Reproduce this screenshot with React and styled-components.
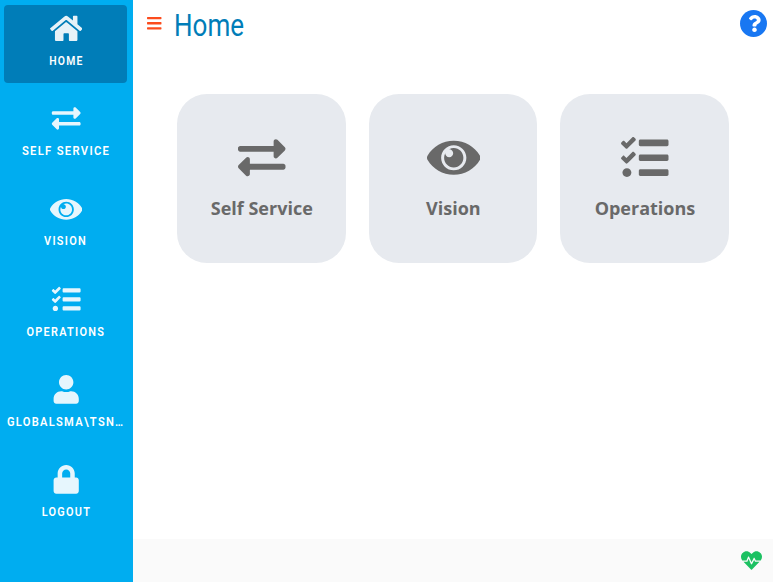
import React from "react";
import styled, { createGlobalStyle } from "styled-components";
import {
  FaExchangeAlt, FaUser, FaLock, FaBars, FaQuestion, FaHeartbeat,
} from "react-icons/fa";

const GlobalStyle = createGlobalStyle`
  *, *::before, *::after { box-sizing: border-box; }
  body { margin: 0; background: #fff; overflow: hidden; }
`;

const Shell = styled.div`
  display: flex;
  height: 100vh;
  font-family: "Open Sans", sans-serif;
`;

const Sidebar = styled.nav`
  flex: 0 0 133px;
  min-width: 0;
  padding: 5px 6px 0 4px;
  background: #00adf0;
`;

const NavItem = styled.a`
  display: flex;
  flex-direction: column;
  align-items: center;
  height: 78px;
  margin-bottom: 12.3px;
  padding: 9px 0 0 1px;
  border-radius: 4px;
  background: ${(p) => (p.$active ? "#007db8" : "transparent")};
  color: #fff;
  cursor: pointer;
  svg {
    display: block;
    flex: none;
    height: 28.8px;
    width: 32.4px;
    opacity: 0.9;
  }
`;

const NavLabel = styled.span`
  margin-top: 9px;
  font: 600 13px/18px Roboto, sans-serif;
  letter-spacing: 1.5px;
  white-space: nowrap;
  transform: scaleX(${(p) => p.$stretch});
`;

const Page = styled.div`
  flex: 1;
  display: flex;
  flex-direction: column;
  min-width: 0;
`;

const Header = styled.header`
  display: flex;
  align-items: flex-start;
  height: 50px;
  padding: 0 6px 0 13px;
`;

const MenuButton = styled.button`
  display: flex;
  margin: 14.5px 12px 0 0;
  padding: 0;
  border: 0;
  background: none;
  color: #fc4c1d;
  font-size: 16.5px;
`;

const Title = styled.h1`
  margin: 6px 0 0 -1px;
  font: 400 31px/40px Roboto, sans-serif;
  color: #007db8;
  transform: scaleX(0.84);
  transform-origin: left;
`;

const HelpButton = styled.button`
  display: flex;
  align-items: center;
  justify-content: center;
  width: 27px;
  height: 27px;
  margin: 10px 0 0 auto;
  padding: 0 0 0 1px;
  border: 0;
  border-radius: 50%;
  background: #1877f2;
  color: #fff;
  font-size: 17px;
`;

const Tiles = styled.main`
  flex: 1;
  display: grid;
  grid-template-columns: repeat(3, 168.6px);
  grid-auto-rows: 169px;
  gap: 23px;
  padding: 44px 0 0 44px;
`;

const Tile = styled.a`
  display: flex;
  flex-direction: column;
  align-items: center;
  padding: 40px 0 0 1px;
  border-radius: 30px;
  background: #e7eaef;
  color: #696969;
  cursor: pointer;
  svg {
    display: block;
    flex: none;
    height: 47.5px;
    width: 53.5px;
  }
`;

const TileLabel = styled.span`
  margin-top: 14.5px;
  font-size: 18px;
  line-height: 25px;
  font-weight: 700;
`;

const Footer = styled.footer`
  display: flex;
  align-items: center;
  justify-content: flex-end;
  height: 43px;
  padding-right: 11px;
  background: #fafafa;
  color: #1cc162;
  font-size: 21px;
`;

const HomeIcon = () => (
  <svg viewBox="0 0 576 512" fill="currentColor">
    <path d="M488 312.7V456c0 13.3-10.7 24-24 24H348c-6.6 0-12-5.4-12-12V356c0-6.6-5.4-12-12-12h-72c-6.6 0-12 5.4-12 12v112c0 6.6-5.4 12-12 12H112c-13.3 0-24-10.7-24-24V312.7c0-3.6 1.6-7 4.4-9.3l188-154.8c4.4-3.6 10.8-3.6 15.3 0l188 154.8c2.7 2.3 4.3 5.7 4.3 9.3zm83.6-60.9L488 182.9V44.4c0-6.6-5.4-12-12-12h-56c-6.6 0-12 5.4-12 12V117l-89.5-73.7c-17.7-14.6-43.3-14.6-61 0L4.4 251.8c-5.1 4.2-5.8 11.8-1.6 16.9l25.5 31c4.2 5.1 11.8 5.8 16.9 1.6l235.2-193.7c4.4-3.6 10.8-3.6 15.3 0l235.2 193.7c5.1 4.2 12.7 3.5 16.9-1.6l25.5-31c4.2-5.2 3.4-12.7-1.7-16.9z" />
  </svg>
);

const EyeIcon = () => (
  <svg viewBox="0 0 576 512" fill="currentColor">
    <path d="M569.354 231.631C512.969 135.949 407.81 72 288 72 168.14 72 63.004 135.994 6.646 231.631a47.999 47.999 0 0 0 0 48.739C63.031 376.051 168.19 440 288 440c119.86 0 224.996-63.994 281.354-159.631a47.997 47.997 0 0 0 0-48.738zM288 392c-75.162 0-136-60.827-136-136 0-75.162 60.826-136 136-136 75.162 0 136 60.826 136 136 0 75.162-60.826 136-136 136zm104-136c0 57.438-46.562 104-104 104s-104-46.562-104-104c0-17.708 4.431-34.379 12.236-48.973l-.001.032c0 23.651 19.173 42.823 42.824 42.823s42.824-19.173 42.824-42.823c0-23.651-19.173-42.824-42.824-42.824l-.032.001C253.621 156.431 270.292 152 288 152c57.438 0 104 46.562 104 104z" />
  </svg>
);

const TasksIcon = () => (
  <svg viewBox="0 0 512 512" fill="currentColor">
    <path d="M208 132h288c8.8 0 16-7.2 16-16V76c0-8.8-7.2-16-16-16H208c-8.8 0-16 7.2-16 16v40c0 8.8 7.2 16 16 16zm0 160h288c8.8 0 16-7.2 16-16v-40c0-8.8-7.2-16-16-16H208c-8.8 0-16 7.2-16 16v40c0 8.8 7.2 16 16 16zm0 160h288c8.8 0 16-7.2 16-16v-40c0-8.8-7.2-16-16-16H208c-8.8 0-16 7.2-16 16v40c0 8.8 7.2 16 16 16zM64 368c-26.5 0-48.6 21.5-48.6 48s22.1 48 48.6 48 48-21.5 48-48-21.5-48-48-48zm92.5-299l-72.2 72.2-15.6 15.6c-4.7 4.7-12.9 4.7-17.6 0L3.5 109.4c-4.7-4.7-4.7-12.3 0-17l15.7-15.7c4.7-4.7 12.3-4.7 17 0l22.7 22.1 63.7-63.3c4.7-4.7 12.3-4.7 17 0l17 16.5c4.6 4.7 4.6 12.3-.1 17zm0 159.6l-72.2 72.2-15.7 15.7c-4.7 4.7-12.9 4.7-17.6 0L3.5 269c-4.7-4.7-4.7-12.3 0-17l15.7-15.7c4.7-4.7 12.3-4.7 17 0l22.7 22.1 63.7-63.7c4.7-4.7 12.3-4.7 17 0l17 17c4.6 4.6 4.6 12.2-.1 16.9z" />
  </svg>
);

const navItems = [
  { label: "HOME", Icon: HomeIcon, stretch: 0.8, active: true },
  { label: "SELF SERVICE", Icon: FaExchangeAlt, stretch: 0.865 },
  { label: "VISION", Icon: EyeIcon, stretch: 0.84 },
  { label: "OPERATIONS", Icon: TasksIcon, stretch: 0.84 },
  { label: "GLOBALSMA\\TSN…", Icon: FaUser, stretch: 0.855 },
  { label: "LOGOUT", Icon: FaLock, stretch: 0.84 },
];

const tiles = [
  { label: "Self Service", Icon: FaExchangeAlt },
  { label: "Vision", Icon: EyeIcon },
  { label: "Operations", Icon: TasksIcon },
];

export default function App() {
  return (
    <Shell>
      <GlobalStyle />
      <Sidebar>
        {navItems.map(({ label, Icon, stretch, active }) => (
          <NavItem key={label} $active={active}>
            <Icon />
            <NavLabel $stretch={stretch}>{label}</NavLabel>
          </NavItem>
        ))}
      </Sidebar>
      <Page>
        <Header>
          <MenuButton aria-label="Menu"><FaBars /></MenuButton>
          <Title>Home</Title>
          <HelpButton aria-label="Help"><FaQuestion /></HelpButton>
        </Header>
        <Tiles>
          {tiles.map(({ label, Icon }) => (
            <Tile key={label}>
              <Icon />
              <TileLabel>{label}</TileLabel>
            </Tile>
          ))}
        </Tiles>
        <Footer><FaHeartbeat /></Footer>
      </Page>
    </Shell>
  );
}
